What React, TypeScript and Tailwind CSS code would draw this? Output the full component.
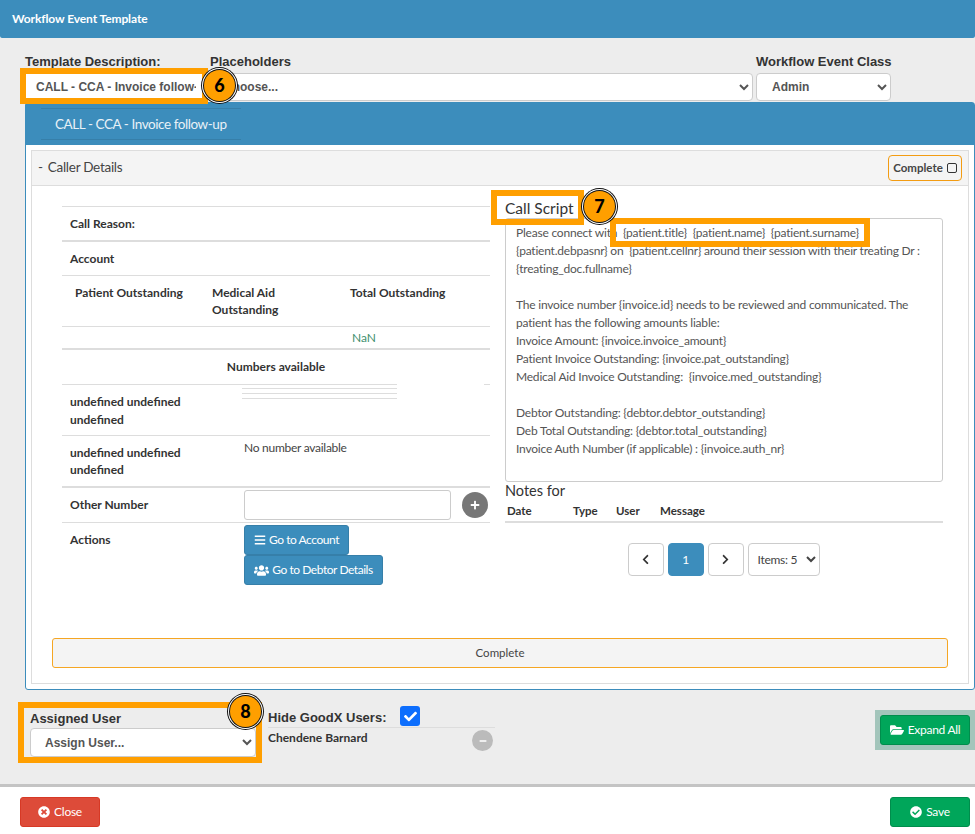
import { FaBars, FaCheck, FaCheckCircle, FaChevronLeft, FaChevronRight, FaFolderOpen, FaMinus, FaPlus, FaTimesCircle, FaUsers } from "react-icons/fa";

const font = "font-['Lato','Noto_Sans',sans-serif]";
const arial = "font-['Liberation_Sans',Arial,sans-serif] tracking-normal";

const scriptLines = [
  "{patient.debpasnr} on  {patient.cellnr} around their session with their treating Dr :",
  "{treating_doc.fullname}",
  "",
  "The invoice number {invoice.id} needs to be reviewed and communicated. The",
  "patient has the following amounts liable:",
  "Invoice Amount: {invoice.invoice_amount}",
  "Patient Invoice Outstanding: {invoice.pat_outstanding}",
  "Medical Aid Invoice Outstanding:  {invoice.med_outstanding}",
  "",
  "Debtor Outstanding: {debtor.debtor_outstanding}",
  "Deb Total Outstanding: {debtor.total_outstanding}",
  "Invoice Auth Number (if applicable) : {invoice.auth_nr}",
];

function Badge({ n, className }: { n: number; className: string }) {
  return (
    <div
      className={`absolute z-20 flex h-[31px] w-[31px] items-center justify-center rounded-full bg-[#ff9f00] text-[18px] font-black tracking-normal text-black shadow-[0_0_0_1px_#111,0_0_0_2px_#fff,0_0_0_3px_#111] ${font} ${className}`}
    >
      {n}
    </div>
  );
}

function PageButton({ children, active }: { children: React.ReactNode; active?: boolean }) {
  return (
    <button
      className={`flex h-[33px] w-9 items-center justify-center rounded-[4px] border text-[12px] ${
        active ? "border-[#3c8dbc] bg-[#3c8dbc] text-white" : "border-[#ccc] bg-white text-[#333]"
      }`}
    >
      {children}
    </button>
  );
}

export default function App() {
  return (
    <div className={`relative flex h-[834px] w-[975px] flex-col overflow-hidden bg-white text-[12px] tracking-[-0.27px] text-[#444] ${font}`}>
      {/* Header */}
      <div className="flex h-[38px] shrink-0 items-center rounded-b-[2px] bg-[#3c8dbc] pl-3 text-[12px] font-bold tracking-[-0.1px] text-white">
        Workflow Event Template
      </div>

      {/* Main */}
      <div className="flex h-[746px] shrink-0 flex-col bg-[#ededed] pl-[25px]">
        <div className={`mt-[14px] mb-[1px] flex h-[20px] items-center text-[13px] font-bold text-[#333] ${arial}`}>
          <div className="w-[185px]">Template Description:</div>
          <div className="w-[546px]">Placeholders</div>
          <div>Workflow Event Class</div>
        </div>
        <div className={`flex h-[29px] text-[12px] font-bold text-[#555] ${arial}`}>
          <input
            readOnly
            value="CALL - CCA - Invoice follow-up"
            className="h-[28px] w-[183px] border border-[#d2d6de] bg-white pr-[11px] pl-[10px] outline-none"
          />
          <select className="h-[28px] w-[545px] rounded-[4px] border border-[#ccc] bg-white pl-[11px]">
            <option>Choose...</option>
          </select>
          <select className="ml-[3px] h-[28px] w-[135px] rounded-[4px] border border-[#ccc] bg-white pl-[11px]">
            <option>Admin</option>
          </select>
        </div>

        {/* Blue panel */}
        <div className="h-[588px] w-[950px] rounded-[3px] border border-[#3c8dbc] bg-white">
          <div className="h-[42px] bg-[#3c8dbc] pt-[5px] pl-[15px]">
            <div className="flex h-[32px] w-[200px] items-center border-y border-[#367fa9] pl-[14px] text-[13.5px] tracking-[-0.43px] whitespace-nowrap text-[#e8f1f7]">
              CALL - CCA - Invoice follow-up
            </div>
          </div>

          {/* Card */}
          <div className="mt-[5px] mr-[5px] ml-[5px] flex h-[534px] flex-col border border-[#ddd]">
            <div className="flex h-[35px] shrink-0 items-center justify-between border-b border-[#ddd] bg-[#f4f4f4] pr-[6px] pl-[6px]">
              <span className="mb-[2px] flex gap-[5px] text-[13.5px] text-[#444]">
                <span>-</span>
                <span>Caller Details</span>
              </span>
              <button className="flex h-[26px] w-[74px] items-center justify-center gap-1 rounded-[4px] border border-[#f39c12] text-[11.5px] font-bold tracking-normal text-[#444]">
                Complete
                <span className="h-[10px] w-[10px] rounded-[2px] border border-[#333]" />
              </button>
            </div>

            <div className="flex h-[452px] shrink-0 pl-[30px]">
              {/* Left column */}
              <div className="mt-5 flex w-[428px] flex-col border-t border-[#ddd] text-[12px] font-bold tracking-normal text-[#333]">
                <div className="flex h-[35px] shrink-0 items-center border-b-2 border-[#ddd] pl-2">Call Reason:</div>
                <div className="flex h-[34px] shrink-0 items-center border-b border-[#ddd] pl-2">Account</div>
                <div className="flex h-[51px] shrink-0 border-b border-[#ddd] pt-[8px] leading-[17px]">
                  <div className="w-[150px] pl-[13px]">Patient Outstanding</div>
                  <div className="w-[138px]">Medical Aid<br />Outstanding</div>
                  <div>Total Outstanding</div>
                </div>
                <div className="flex h-[23px] shrink-0 items-center border-b-2 border-[#ddd] pl-[290px] text-[12px] font-normal text-[#3f8f6f]">NaN</div>
                <div className="flex h-[34px] shrink-0 items-center justify-center">Numbers available</div>
                <div className="flex h-[52px] shrink-0 border-b border-[#ddd]">
                  <div className="w-[180px] border-t border-[#ddd] pt-2 pl-2 leading-[18px]">undefined undefined<br />undefined</div>
                  <div className="flex w-[155px] flex-col">
                    <div className="h-[5px] border-y border-[#ddd]" />
                    <div className="h-[5px] border-b border-[#ddd]" />
                    <div className="h-[5px] border-b border-[#ddd]" />
                  </div>
                  <div className="ml-auto h-0 w-[6px] border-t border-[#ddd]" />
                </div>
                <div className="flex h-[52px] shrink-0 border-b-2 border-[#ddd]">
                  <div className="w-[182px] pt-2 pl-2 leading-[17px]">undefined undefined<br />undefined</div>
                  <div className="pt-[3px] text-[12px] font-normal tracking-[-0.27px] text-[#444]">No number available</div>
                </div>
                <div className="flex h-[35px] shrink-0 items-center border-b border-[#ddd]">
                  <div className="w-[182px] pl-2">Other Number</div>
                  <input className="h-[30px] w-[207px] rounded-[3px] border border-[#ccc] bg-white" />
                  <span className="ml-[11px] flex h-[26px] w-[26px] items-center justify-center rounded-full bg-[#777] text-white">
                    <FaPlus size={10} />
                  </span>
                </div>
                <div className="flex pt-[2px]">
                  <div className="w-[182px] pt-[6px] pl-2">Actions</div>
                  <div className="flex flex-col items-start text-[12px] font-normal tracking-[-0.45px] text-white">
                    <button className="flex h-[30px] w-[105px] items-center justify-center gap-[3px] rounded-[3px] border border-[#367fa9] bg-[#3c8dbc]">
                      <FaBars size={12} />
                      Go to Account
                    </button>
                    <button className="flex h-[30px] w-[139px] items-center justify-center gap-[3px] rounded-[3px] border border-[#367fa9] bg-[#3c8dbc]">
                      <FaUsers size={15} />
                      Go to Debtor Details
                    </button>
                  </div>
                </div>
              </div>

              {/* Right column */}
              <div className="ml-[15px] w-[438px] pt-3">
                <div className="h-5 text-[15.5px] leading-5 tracking-normal text-[#333]">Call Script</div>
                <div className="h-[264px] rounded-[3px] border border-[#ccc] bg-white px-[10px] pt-[5px] text-[12px] leading-[18px] tracking-[-0.21px] text-[#555]">
                  <div className="whitespace-pre">
                    Please connect with  {"{patient.title}"}  {"{patient.name}"}  {"{patient.surname}"}
                  </div>
                  {scriptLines.map((line, i) => (
                    <div key={i} className="h-[18px] whitespace-pre">
                      {line}
                    </div>
                  ))}
                </div>
                <div className="h-[18px] text-[14.5px] leading-[18px] tracking-normal text-[#333]">Notes for</div>
                <div className="flex h-[23px] items-center border-b-2 border-[#ddd] pl-[2px] text-[11.5px] font-bold tracking-normal text-[#333]">
                  <div className="w-[66px]">Date</div>
                  <div className="w-[43px]">Type</div>
                  <div className="w-[44px]">User</div>
                  <div>Message</div>
                </div>
                <div className="mt-[20px] flex items-center justify-center gap-1 pr-[1px]">
                  <PageButton><FaChevronLeft size={11} /></PageButton>
                  <PageButton active>1</PageButton>
                  <PageButton><FaChevronRight size={11} /></PageButton>
                  <select className="h-[33px] w-[72px] rounded-[4px] border border-[#ccc] bg-white pl-[5px] text-[12px] text-[#444]">
                    <option>Items: 5</option>
                  </select>
                </div>
              </div>
            </div>

            <button className="mx-5 h-[30px] shrink-0 rounded-[3px] border border-[#f5a623] bg-[#f4f4f4] text-[11.5px] tracking-normal text-[#444]">
              Complete
            </button>
          </div>
        </div>

        {/* Assign row */}
        <div className="flex h-[94px] pl-[5px]">
          <div className="w-[226px] pt-[21px]">
            <div className={`h-[17px] text-[13px] leading-[15px] font-bold text-[#333] ${arial}`}>Assigned User</div>
            <select className={`h-[29px] w-[226px] rounded-[4px] border border-[#ccc] bg-white pl-[10px] text-[12px] font-bold text-[#555] ${arial}`}>
              <option>Assign User...</option>
            </select>
          </div>
          <div className="ml-3 w-[227px]">
            <div className="flex h-[38px] items-end border-b border-[#ddd]">
              <span className={`text-[13px] font-bold text-[#333] ${arial}`}>Hide GoodX Users:</span>
              <span className="mb-[1px] ml-[14px] flex h-5 w-5 items-center justify-center rounded-[3px] bg-[#0d6efd] text-white">
                <FaCheck size={13} />
              </span>
            </div>
            <div className="flex justify-between pt-[2px] pr-[2px] text-[12px] font-bold tracking-normal text-[#333]">
              <span className="leading-4">Chendene Barnard</span>
              <span className="flex h-[21px] w-[21px] items-center justify-center rounded-full bg-[#bbb] text-white">
                <FaMinus size={8} />
              </span>
            </div>
          </div>
          <div className="mt-5 ml-auto h-10 w-[100px] bg-[#a3c5bb] p-[5px]">
            <button className="flex h-[30px] w-[90px] items-center justify-center gap-1 rounded-[3px] border border-[#008d4c] bg-[#00a65a] text-[12px] text-white">
              <FaFolderOpen size={14} />
              Expand All
            </button>
          </div>
        </div>
      </div>

      {/* Footer */}
      <div className="flex flex-1 items-start justify-between border-t-[3px] border-[#c4c4c4] bg-white pt-[10px] pr-[5px] pl-5 text-[12px] text-white">
        <button className="flex h-[30px] w-20 items-center justify-center gap-1 rounded-[3px] border border-[#d73925] bg-[#dd4b39]">
          <FaTimesCircle size={12} />
          Close
        </button>
        <button className="flex h-[30px] w-20 items-center justify-center gap-1 rounded-[3px] border border-[#008d4c] bg-[#00a65a]">
          <FaCheckCircle size={12} />
          Save
        </button>
      </div>

      {/* Annotation overlays */}
      <div className="absolute top-[68px] left-[20px] z-10 h-[36px] w-[188px] border-[6px] border-[#ff9f00]" />
      <Badge n={6} className="top-[70px] left-[204px]" />
      <div className="absolute top-[190px] left-[491px] z-10 h-[35px] w-[93px] border-[6px] border-[#ff9f00]" />
      <Badge n={7} className="top-[191px] left-[584px]" />
      <div className="absolute top-[218px] left-[610px] z-10 h-[29px] w-[260px] border-[6px] border-[#ff9f00]" />
      <div className="absolute top-[702px] left-[18px] z-10 h-[61px] w-[244px] border-[6px] border-[#ff9f00]" />
      <Badge n={8} className="top-[696px] left-[230px]" />
    </div>
  );
}
